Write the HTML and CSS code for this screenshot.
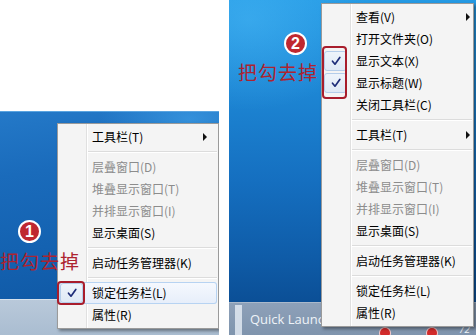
FILE: index.html
```html
<!DOCTYPE html>
<html lang="zh-CN">
<head>
<meta charset="utf-8">
<title>锁定任务栏</title>
<link rel="stylesheet" href="styles.css">
</head>
<body>
<div class="shot">
  <section class="panel left">
    <div class="blank"></div>
    <div class="desk"></div>
    <div class="taskbar"></div>

    <div class="menu menu-a">
      <div class="item"><span class="ico"></span><span class="label">工具栏(T)</span><span class="arrow"></span></div>
      <div class="sep"></div>
      <div class="item dis"><span class="ico"></span><span class="label">层叠窗口(D)</span></div>
      <div class="item dis"><span class="ico"></span><span class="label">堆叠显示窗口(T)</span></div>
      <div class="item dis"><span class="ico"></span><span class="label">并排显示窗口(I)</span></div>
      <div class="item"><span class="ico"></span><span class="label">显示桌面(S)</span></div>
      <div class="sep"></div>
      <div class="item"><span class="ico"></span><span class="label">启动任务管理器(K)</span></div>
      <div class="sep"></div>
      <div class="item hot"><span class="ico on"><svg class="tick" width="10" height="10" viewBox="0 0 10 10"><path d="M1.5 5.2 L4 8.2 L8.8 1.5" /></svg></span><span class="label">锁定任务栏(L)</span></div>
      <div class="item"><span class="ico"></span><span class="label">属性(R)</span></div>
    </div>

    <span class="num num-a">1</span>
    <span class="hint hint-a">把勾去掉</span>
    <span class="mark mark-a"></span>
  </section>

  <div class="gap"></div>

  <section class="panel right">
    <div class="desk"></div>
    <div class="taskbar">
      <span class="grip"></span>
      <span class="ql">Quick Launch</span>
      <span class="tray tray-1"></span>
      <span class="tray tray-2"></span>
      <span class="clock">72</span>
    </div>

    <div class="menu menu-b">
      <div class="item"><span class="ico"></span><span class="label">查看(V)</span><span class="arrow"></span></div>
      <div class="item"><span class="ico"></span><span class="label">打开文件夹(O)</span></div>
      <div class="item"><span class="ico on"><svg class="tick" width="10" height="10" viewBox="0 0 10 10"><path d="M1.5 5.2 L4 8.2 L8.8 1.5" /></svg></span><span class="label">显示文本(X)</span></div>
      <div class="item"><span class="ico on"><svg class="tick" width="10" height="10" viewBox="0 0 10 10"><path d="M1.5 5.2 L4 8.2 L8.8 1.5" /></svg></span><span class="label">显示标题(W)</span></div>
      <div class="item"><span class="ico"></span><span class="label">关闭工具栏(C)</span></div>
      <div class="sep"></div>
      <div class="item"><span class="ico"></span><span class="label">工具栏(T)</span><span class="arrow"></span></div>
      <div class="sep"></div>
      <div class="item dis"><span class="ico"></span><span class="label">层叠窗口(D)</span></div>
      <div class="item dis"><span class="ico"></span><span class="label">堆叠显示窗口(T)</span></div>
      <div class="item dis"><span class="ico"></span><span class="label">并排显示窗口(I)</span></div>
      <div class="item"><span class="ico"></span><span class="label">显示桌面(S)</span></div>
      <div class="sep"></div>
      <div class="item"><span class="ico"></span><span class="label">启动任务管理器(K)</span></div>
      <div class="sep"></div>
      <div class="item"><span class="ico"></span><span class="label">锁定任务栏(L)</span></div>
      <div class="item"><span class="ico"></span><span class="label">属性(R)</span></div>
    </div>

    <span class="num num-b">2</span>
    <span class="hint hint-b">把勾去掉</span>
    <span class="mark mark-b"></span>
  </section>
</div>
</body>
</html>
```

FILE: styles.css
```css
html, body {
  margin: 0;
  padding: 0;
}
body {
  width: 476px;
  height: 335px;
  overflow: hidden;
  background: #fff;
  font-family: "Noto Sans CJK SC", "Noto Sans", sans-serif;
}
.shot {
  display: flex;
  height: 335px;
}
.panel {
  position: relative;
  overflow: hidden;
  display: flex;
  flex-direction: column;
  height: 335px;
}
.left { width: 219px; }
.gap { width: 10px; }
.right { width: 247px; }

.blank {
  height: 111px;
  background: #fff;
}
.desk { flex: 1; }
.left .desk {
  background:
    radial-gradient(ellipse 90px 40px at 190px 8px, rgba(70, 170, 240, 0.55), rgba(70, 170, 240, 0) 100%),
    linear-gradient(172deg, #2479c8 0%, #1a6bbb 30%, #1462b1 65%, #0f57a3 100%);
  box-shadow: inset 0 1px 0 #5aa4e0;
}
.left .taskbar {
  height: 36px;
  background: linear-gradient(to bottom, #b9c9da, #aabdd1);
  box-shadow: inset 0 1px 0 #d6e1ec;
}
.right .desk {
  background:
    radial-gradient(ellipse 120px 90px at 20px 20px, rgba(80, 190, 250, 0.45), rgba(80, 190, 250, 0) 100%),
    linear-gradient(to bottom, #259ae4 0%, #1d86d4 30%, #156fc0 60%, #0f5ca8 85%, #0b4f96 100%);
}
.right .taskbar {
  position: relative;
  height: 33px;
  background: linear-gradient(to bottom, #8ea1b9, #7f94ad);
  box-shadow: inset 0 1px 0 #aab9cb;
}
.grip {
  position: absolute;
  left: 6px;
  top: 3px;
  width: 7px;
  height: 30px;
  background: radial-gradient(circle at 1px 1px, #e6edf5 0.9px, transparent 1.1px) 0 0 / 2px 2px;
  opacity: 0.8;
}
.ql {
  position: absolute;
  left: 21px;
  top: 8px;
  font-family: "Open Sans", "Noto Sans", sans-serif;
  font-size: 13px;
  line-height: 18px;
  color: #eef3f8;
}
.tray {
  position: absolute;
  top: 26px;
  width: 10px;
  height: 10px;
  border-radius: 50%;
  background: #d22b2b;
  box-shadow: 0 0 0 1px #f3c9c9;
}
.tray-1 { left: 151px; }
.tray-2 { left: 198px; }
.clock {
  position: absolute;
  left: 230px;
  top: 22px;
  font-family: "Open Sans", sans-serif;
  font-size: 10px;
  line-height: 10px;
  color: #eef3f8;
  font-style: italic;
}

/* context menu */
.menu {
  position: absolute;
  box-sizing: border-box;
  border: 1px solid #9a9a9a;
  padding: 2px 1px;
  background:
    linear-gradient(to right, transparent 28px, #e0e0e0 28px, #e0e0e0 29px, #ffffff 29px, #ffffff 30px, transparent 30px),
    #f4f4f4;
  box-shadow: 2px 2px 3px rgba(0, 0, 0, 0.4);
  font-size: 12px;
  color: #000;
}
.menu-a {
  left: 57px;
  top: 123px;
  width: 162px;
}
.menu-b {
  left: 92px;
  top: 3px;
  width: 153px;
}
.item {
  display: flex;
  align-items: center;
  height: 22px;
  border-radius: 3px;
}
.ico {
  flex: none;
  box-sizing: border-box;
  width: 23px;
  height: 20px;
  margin-left: 1px;
  margin-right: 9px;
  display: flex;
  align-items: center;
  justify-content: center;
}
.ico.on {
  border: 1px solid #b4cdea;
  border-radius: 3px;
  background: linear-gradient(to bottom, #eef4fb, #dfe9f5);
}
.tick path {
  fill: none;
  stroke: #1e2d78;
  stroke-width: 1.7;
  stroke-linecap: round;
  stroke-linejoin: round;
}
.label {
  white-space: nowrap;
  line-height: 22px;
}
.dis { color: #8c8c8c; }
.hot {
  box-shadow: inset 0 0 0 1px #b7d3f2;
  background: linear-gradient(to bottom, #f6f9fe, #e6eefa);
}
.arrow {
  margin-left: auto;
  width: 0;
  height: 0;
  border-left: 4px solid #111;
  border-top: 4px solid transparent;
  border-bottom: 4px solid transparent;
}
.menu-a .arrow { margin-right: 10px; }
.menu-b .arrow { margin-right: 2px; }
.sep {
  height: 8px;
  margin-left: 29px;
  background: linear-gradient(to bottom, transparent 3px, #dcdcdc 3px, #dcdcdc 4px, #ffffff 4px, #ffffff 5px, transparent 5px);
}

/* annotations */
.num {
  position: absolute;
  box-sizing: border-box;
  width: 23px;
  height: 23px;
  border-radius: 50%;
  border: 2px solid #fff;
  background: #bf2830;
  color: #fff;
  font-family: "Liberation Sans", sans-serif;
  font-weight: bold;
  font-size: 16px;
  line-height: 19px;
  text-align: center;
}
.num-a { left: 18px; top: 220px; }
.num-b { left: 55px; top: 32px; }
.hint {
  position: absolute;
  font-family: "Noto Sans CJK SC", sans-serif;
  font-size: 19px;
  line-height: 22px;
  color: #ad2330;
  letter-spacing: 1px;
  white-space: nowrap;
}
.hint-a { left: 0; top: 250px; }
.hint-b { left: 9px; top: 61px; }
.mark {
  position: absolute;
  box-sizing: border-box;
  border: 2px solid #a81d2c;
  border-radius: 4px;
}
.mark-a { left: 57px; top: 281px; width: 28px; height: 24px; }
.mark-b { left: 93px; top: 46px; width: 25px; height: 53px; }
```
